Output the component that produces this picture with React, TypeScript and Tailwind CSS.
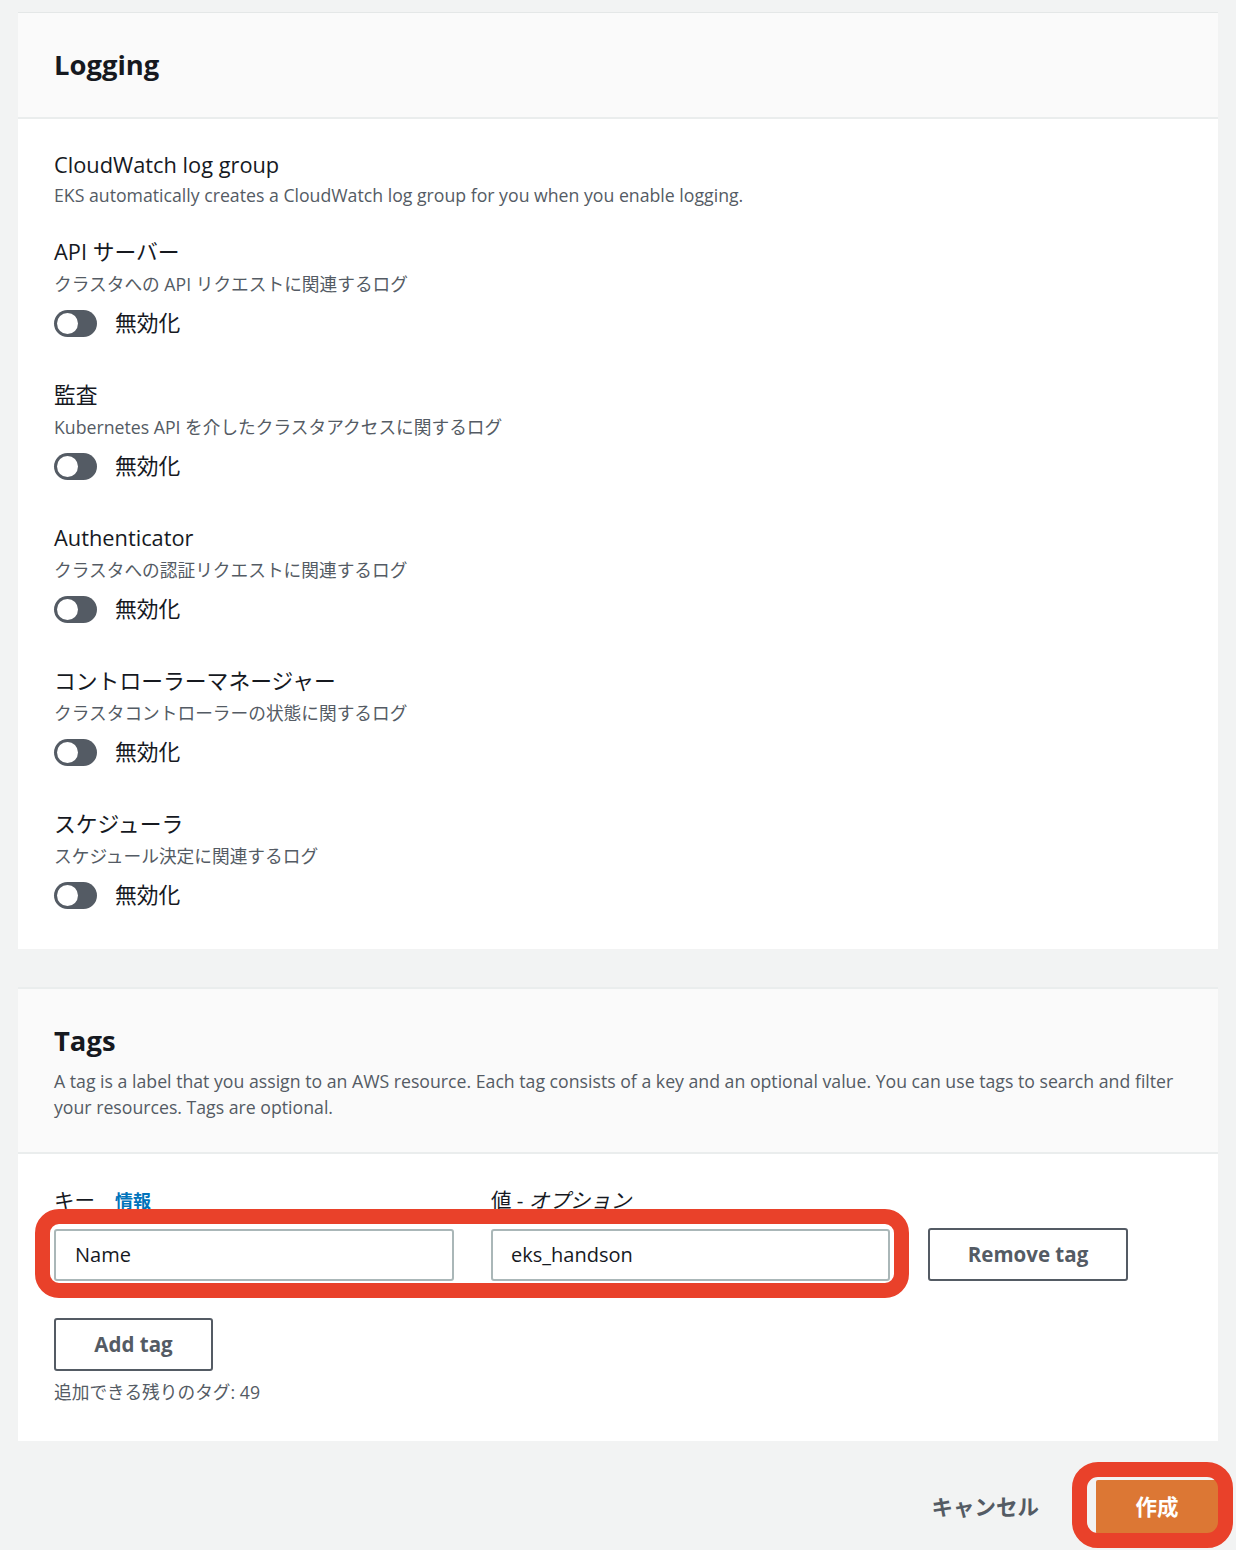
import React from 'react';

const FONT = { fontFamily: '"Open Sans", "Noto Sans CJK JP", sans-serif' };

const LOG_TYPES = [
  { title: 'API サーバー', desc: 'クラスタへの API リクエストに関連するログ' },
  { title: '監査', desc: 'Kubernetes API を介したクラスタアクセスに関するログ' },
  { title: 'Authenticator', desc: 'クラスタへの認証リクエストに関連するログ' },
  { title: 'コントローラーマネージャー', desc: 'クラスタコントローラーの状態に関するログ' },
  { title: 'スケジューラ', desc: 'スケジュール決定に関連するログ' },
];

function Toggle() {
  return (
    <div className="flex items-center gap-[18px] h-[30px]">
      <div className="w-[43px] h-[27px] rounded-full bg-[#545b64] flex items-center px-[3px]">
        <div className="w-[21px] h-[21px] rounded-full bg-white" />
      </div>
      <span className="text-[21.8px] leading-[30px] text-[#16191f]">無効化</span>
    </div>
  );
}

export default function App() {
  return (
    <div className="min-h-[1550px] bg-[#f2f3f3] pt-[12px] px-[18px]" style={FONT}>
      {/* Logging panel */}
      <div className="bg-white border-t border-[#e4e7e7]">
        <div className="bg-[#fafafa] border-b-2 border-[#eaeded] pl-9 h-[106px] flex items-center">
          <h2 className="text-[27.4px] font-bold text-[#16191f] leading-[36px]">Logging</h2>
        </div>
        <div className="pl-9 pt-[31px] pb-[39px]">
          <div className="text-[21.8px] leading-[30px] text-[#16191f]">CloudWatch log group</div>
          <div className="text-[17.7px] leading-[26px] text-[#545b64] mt-[2px]">
            EKS automatically creates a CloudWatch log group for you when you enable logging.
          </div>
          {LOG_TYPES.map((t, i) => (
            <div key={t.title} className={i === 0 ? 'mt-[29px]' : 'mt-[42px]'}>
              <div className="text-[21.8px] leading-[30px] text-[#16191f]">{t.title}</div>
              <div className="text-[17.7px] leading-[26px] text-[#545b64] mt-[4px]">{t.desc}</div>
              <div className="mt-[11px]">
                <Toggle />
              </div>
            </div>
          ))}
        </div>
      </div>

      {/* Tags panel */}
      <div className="mt-[38px] bg-white border-t-2 border-[#eaeded]">
        <div className="bg-[#fafafa] border-b-2 border-[#eaeded] pl-9 pr-3 pt-[34px] pb-[32px]">
          <h2 className="text-[27.4px] font-bold text-[#16191f] leading-[36px]">Tags</h2>
          <p className="text-[17.7px] leading-[26px] text-[#545b64] mt-[9px]">
            A tag is a label that you assign to an AWS resource. Each tag consists of a key and an optional value. You can use tags to search and filter your resources. Tags are optional.
          </p>
        </div>
        <div className="pl-9 pt-[33px] pb-[36px]">
          <div className="flex gap-[37px] text-[20.5px] leading-[26px] text-[#16191f]">
            <div className="w-[400px] flex items-baseline gap-[20px]">
              <span>キー</span>
              <span className="text-[18px] font-bold text-[#0073bb]">情報</span>
            </div>
            <div>
              値 - <span className="italic">オプション</span>
            </div>
          </div>
          <div className="relative mt-[14px] flex items-center">
            <div className="w-[400px] h-[52px] border-2 border-[#aab7b8] rounded-[3px] bg-white flex items-center px-[19px] text-[20px] text-[#16191f]">
              Name
            </div>
            <div className="ml-[37px] w-[399px] h-[52px] border-2 border-[#aab7b8] rounded-[3px] bg-white flex items-center px-[18px] text-[20px] text-[#16191f]">
              eks_handson
            </div>
            <button className="ml-[38px] w-[200px] h-[53px] border-2 border-[#545b64] rounded-[3px] bg-white text-[20.5px] font-bold text-[#545b64]">
              Remove tag
            </button>
            <div className="absolute left-[-19px] top-[-19px] w-[874px] h-[89px] border-[15px] border-[#e9412a] rounded-[24px] pointer-events-none" />
          </div>
          <button className="mt-[37px] w-[159px] h-[53px] border-2 border-[#545b64] rounded-[3px] bg-white text-[20.5px] font-bold text-[#545b64]">
            Add tag
          </button>
          <div className="mt-[8px] text-[17.7px] leading-[26px] text-[#545b64]">追加できる残りのタグ: 49</div>
        </div>
      </div>

      {/* Footer */}
      <div className="mt-[39px] flex items-center justify-end gap-[57px]">
        <span className="text-[21.5px] font-bold text-[#545b64]">キャンセル</span>
        <div className="relative">
          <button className="w-[122px] h-[54px] bg-[#dc7734] rounded-[2px] text-[21.5px] font-bold text-white">作成</button>
          <div className="absolute left-[-24px] top-[-18px] right-[-15px] bottom-[-14px] border-[15px] border-[#e9412a] rounded-[26px] pointer-events-none" />
        </div>
      </div>
    </div>
  );
}
